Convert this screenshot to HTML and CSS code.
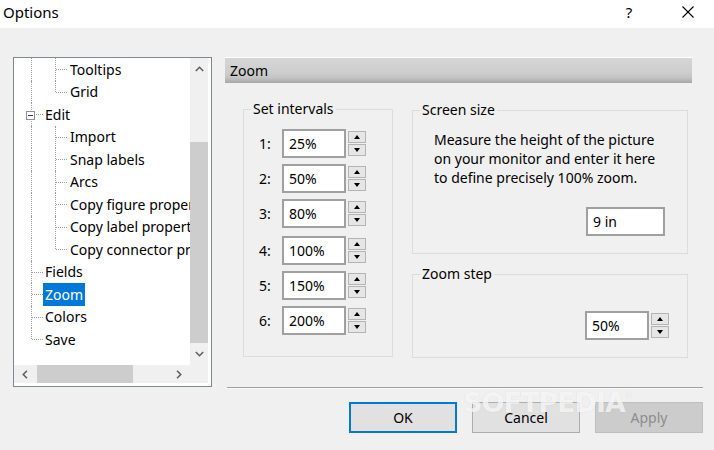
FILE: index.html
```html
<!DOCTYPE html>
<html>
<head>
<meta charset="utf-8">
<title>Options</title>
<link rel="stylesheet" href="styles.css">
</head>
<body>
<div class="window">
  <div class="titlebar">
    <span class="title">Options</span>
    <span class="tb-btn tb-help">?</span>
    <span class="tb-btn tb-close"><svg width="12" height="12" viewBox="0 0 12 12"><path d="M0.5 0.5 L11.5 11.5 M11.5 0.5 L0.5 11.5" stroke="#000" stroke-width="1.1" fill="none"/></svg></span>
  </div>
  <div class="body">
    <div class="tree">
      <div class="tree-items">
        <div class="node"><span class="guide g1 v"></span><span class="guide g2 v h"></span><span class="label">Tooltips</span></div>
        <div class="node"><span class="guide g1 v"></span><span class="guide g2 v end h"></span><span class="label">Grid</span></div>
        <div class="node"><span class="guide g1 v h"><span class="expander"></span></span><span class="label">Edit</span></div>
        <div class="node"><span class="guide g1 v"></span><span class="guide g2 v h"></span><span class="label">Import</span></div>
        <div class="node"><span class="guide g1 v"></span><span class="guide g2 v h"></span><span class="label">Snap labels</span></div>
        <div class="node"><span class="guide g1 v"></span><span class="guide g2 v h"></span><span class="label">Arcs</span></div>
        <div class="node"><span class="guide g1 v"></span><span class="guide g2 v h"></span><span class="label">Copy figure properties</span></div>
        <div class="node"><span class="guide g1 v"></span><span class="guide g2 v h"></span><span class="label">Copy label properties</span></div>
        <div class="node"><span class="guide g1 v"></span><span class="guide g2 v end h"></span><span class="label">Copy connector properties</span></div>
        <div class="node"><span class="guide g1 v h"></span><span class="label">Fields</span></div>
        <div class="node"><span class="guide g1 v h"></span><span class="label selected">Zoom</span></div>
        <div class="node"><span class="guide g1 v h"></span><span class="label">Colors</span></div>
        <div class="node"><span class="guide g1 v end h"></span><span class="label">Save</span></div>
      </div>
      <div class="vscroll">
        <div class="sb-arrow v-arrow"><svg width="9" height="6" viewBox="0 0 9 6"><path d="M0.8 5 L4.5 1.3 L8.2 5" stroke="#606060" stroke-width="1.6" fill="none"/></svg></div>
        <div class="vtrack"><div class="vthumb"></div></div>
        <div class="sb-arrow v-arrow"><svg width="9" height="6" viewBox="0 0 9 6"><path d="M0.8 1 L4.5 4.7 L8.2 1" stroke="#606060" stroke-width="1.6" fill="none"/></svg></div>
      </div>
      <div class="hscroll">
        <div class="sb-arrow h-arrow"><svg width="6" height="9" viewBox="0 0 6 9"><path d="M5 0.8 L1.3 4.5 L5 8.2" stroke="#606060" stroke-width="1.6" fill="none"/></svg></div>
        <div class="htrack"><div class="hthumb"></div></div>
        <div class="sb-arrow h-arrow"><svg width="6" height="9" viewBox="0 0 6 9"><path d="M1 0.8 L4.7 4.5 L1 8.2" stroke="#606060" stroke-width="1.6" fill="none"/></svg></div>
      </div>
      <div class="corner"></div>
    </div>

    <div class="panel">
      <div class="panel-header">Zoom</div>
      <div class="groups">
        <fieldset class="group intervals">
          <legend>Set intervals</legend>
          <div class="rows">
            <div class="row"><span class="row-label">1:</span><span class="field">25%</span><span class="spinner"><span class="spin up"></span><span class="spin down"></span></span></div>
            <div class="row"><span class="row-label">2:</span><span class="field">50%</span><span class="spinner"><span class="spin up"></span><span class="spin down"></span></span></div>
            <div class="row"><span class="row-label">3:</span><span class="field">80%</span><span class="spinner"><span class="spin up"></span><span class="spin down"></span></span></div>
            <div class="row extra"><span class="row-label">4:</span><span class="field">100%</span><span class="spinner"><span class="spin up"></span><span class="spin down"></span></span></div>
            <div class="row"><span class="row-label">5:</span><span class="field">150%</span><span class="spinner"><span class="spin up"></span><span class="spin down"></span></span></div>
            <div class="row"><span class="row-label">6:</span><span class="field">200%</span><span class="spinner"><span class="spin up"></span><span class="spin down"></span></span></div>
          </div>
        </fieldset>
        <div class="side-groups">
          <fieldset class="group screen">
            <legend>Screen size</legend>
            <p class="hint">Measure the height of the picture<br>on your monitor and enter it here<br>to define precisely 100% zoom.</p>
            <div class="field-line"><span class="field wide">9 in</span></div>
          </fieldset>
          <fieldset class="group step">
            <legend>Zoom step</legend>
            <div class="field-line step-line"><span class="field">50%</span><span class="spinner"><span class="spin up"></span><span class="spin down"></span></span></div>
          </fieldset>
        </div>
      </div>
      <div class="separator"></div>
      <div class="buttons">
        <span class="btn default">OK</span>
        <span class="btn">Cancel</span>
        <span class="btn disabled">Apply</span>
      </div>
      <div class="watermark">SOFTPEDIA<sup>®</sup></div>
    </div>
  </div>
</div>
</body>
</html>
```

FILE: styles.css
```css
html, body {
  margin: 0;
  padding: 0;
}
body {
  background: #f0f0f0;
  font-family: "Noto Sans", "Open Sans", "DejaVu Sans", sans-serif;
  font-size: 14px;
  color: #000;
}
.window {
  width: 714px;
  height: 450px;
  display: flex;
  flex-direction: column;
  overflow: hidden;
}

/* title bar */
.titlebar {
  height: 28px;
  background: #fff;
  display: flex;
  align-items: center;
}
.title {
  flex: 1;
  margin-left: 3px;
  font-size: 15px;
  margin-top: -4px;
}
.tb-btn {
  width: 46px;
  height: 28px;
  display: flex;
  align-items: center;
  justify-content: center;
}
.tb-help {
  font-size: 15px;
  margin-right: 13px;
  margin-top: -4px;
}
.tb-close {
  margin-right: 3px;
  margin-top: -4px;
}

/* body */
.body {
  display: flex;
  align-items: flex-start;
  padding: 29px 0 0 13px;
}

/* tree */
.tree {
  width: 199px;
  height: 330px;
  box-sizing: border-box;
  border: 1px solid #828790;
  background: #fff;
  padding: 0 3px 3px 0;
  display: grid;
  grid-template-columns: 176px 18px;
  grid-template-rows: 307px 18px;
  flex: none;
}
.tree-items {
  overflow: hidden;
  white-space: nowrap;
}
.node {
  height: 22.5px;
  display: flex;
  align-items: stretch;
}
.guide {
  position: relative;
  flex: none;
}
.g1 { width: 29px; }
.g2 { width: 25px; }
.guide.v::before {
  content: "";
  position: absolute;
  top: 0;
  bottom: 0;
  border-left: 1px dotted #a0a0a0;
}
.guide.v.end::before { bottom: 50%; }
.guide.h::after {
  content: "";
  position: absolute;
  top: 50%;
  border-top: 1px dotted #a0a0a0;
}
.g1.v::before { left: 17px; }
.g1.h::after { left: 18px; right: 0; }
.g2.v::before { left: 12px; }
.g2.h::after { left: 13px; right: 1px; }
.expander {
  position: absolute;
  z-index: 1;
  left: 12px;
  top: calc(50% - 3px);
  width: 9px;
  height: 9px;
  box-sizing: border-box;
  border: 1px solid #919191;
  background: #fff;
  display: flex;
  align-items: center;
  justify-content: center;
}
.expander::before {
  content: "";
  width: 5px;
  height: 1px;
  background: #1f3b8f;
}
.label {
  padding: 0 2px;
  display: flex;
  align-items: center;
}
.label.selected {
  background: #0078d7;
  color: #fff;
}

/* scrollbars */
.vscroll, .hscroll, .corner {
  background: #f0f0f0;
}
.vscroll {
  display: flex;
  flex-direction: column;
}
.hscroll {
  display: flex;
}
.sb-arrow {
  display: flex;
  align-items: center;
  justify-content: center;
  flex: none;
}
.v-arrow { height: 22px; }
.h-arrow { width: 22px; }
.vtrack { flex: 1; }
.vthumb {
  margin-top: 62px;
  height: 201px;
  background: #cdcdcd;
}
.htrack { flex: 1; }
.hthumb {
  margin-left: 1px;
  width: 96px;
  height: 100%;
  background: #cdcdcd;
}

/* panel */
.panel {
  position: relative;
  margin-left: 13px;
  width: 478px;
  flex: none;
}
.panel-header {
  width: 467px;
  height: 26px;
  border-top: 1px solid #fff;
  background: linear-gradient(#d6d6d6, #cdcdcd 60%, #c2c2c2 80%, #a6a6a6 100%);
  padding-left: 5px;
  box-sizing: border-box;
  display: flex;
  align-items: center;
}
.groups {
  display: flex;
  align-items: flex-start;
  margin-top: 17px;
}
.group {
  margin: 0;
  padding: 0;
  border: 1px solid #dcdcdc;
  box-sizing: border-box;
  min-width: 0;
}
.group legend {
  margin-left: 7px;
  padding: 0 2px;
  line-height: 18px;
  height: 18px;
}
.intervals {
  margin-left: 18px;
  width: 150px;
  height: 257px;
}
.rows {
  margin-top: 11px;
  padding-left: 15px;
  display: flex;
  flex-direction: column;
  gap: 6px;
}
.row {
  display: flex;
  align-items: flex-start;
}
.row.extra { margin-top: 2px; }
.row-label {
  width: 23px;
  height: 29px;
  line-height: 29px;
}
.field {
  width: 64px;
  height: 29px;
  box-sizing: border-box;
  border: 2px solid #a0a0a0;
  background: #fff;
  padding-left: 5px;
  line-height: 25px;
  flex: none;
}
.field.wide { width: 79px; }
.spinner {
  display: flex;
  flex-direction: column;
  gap: 1px;
  margin-left: 2px;
  margin-top: 2px;
}
.spin {
  width: 18px;
  height: 12px;
  box-sizing: border-box;
  border: 1px solid #b4b4b4;
  background: #e6e6e6;
  display: flex;
  align-items: center;
  justify-content: center;
}
.spin::before {
  content: "";
  width: 0;
  height: 0;
  border-left: 3.5px solid transparent;
  border-right: 3.5px solid transparent;
}
.spin.up::before { border-bottom: 4px solid #000; }
.spin.down::before { border-top: 4px solid #000; }

.side-groups {
  margin-left: 19px;
  margin-top: 1px;
  display: flex;
  flex-direction: column;
  gap: 11px;
}
.screen {
  width: 276px;
  height: 153px;
}
.hint {
  margin: 11px 0 0 0;
  padding-left: 21px;
  line-height: 19px;
  white-space: nowrap;
}
.field-line {
  display: flex;
  justify-content: flex-end;
  align-items: flex-start;
  margin-top: 20px;
  margin-right: 22px;
}
.step {
  width: 276px;
  height: 93px;
}
.step-line {
  margin-top: 28px;
  margin-right: 18px;
}

.separator {
  margin: 29px 0 0 2px;
  width: 476px;
  height: 1px;
  background: #a0a0a0;
  border-bottom: 1px solid #fafafa;
}
.buttons {
  display: flex;
  justify-content: flex-end;
  gap: 15px;
  margin-top: 13px;
}
.btn {
  width: 108px;
  height: 31px;
  box-sizing: border-box;
  border: 1px solid #adadad;
  background: #e1e1e1;
  display: flex;
  align-items: center;
  justify-content: center;
}
.btn.default { border: 2px solid #0078d7; }
.btn.disabled {
  background: #cccccc;
  border-color: #bfbfbf;
  color: #8c8c8c;
}
.watermark {
  position: absolute;
  left: 238px;
  top: 330px;
  font-family: "DejaVu Sans", sans-serif;
  font-weight: bold;
  font-size: 27px;
  letter-spacing: -1px;
  color: rgba(255, 255, 255, 0.75);
  text-shadow: 0 0 1px rgba(0, 0, 0, 0.12);
  pointer-events: none;
}
.watermark sup {
  font-size: 9px;
  font-weight: normal;
  vertical-align: 14px;
}
```
